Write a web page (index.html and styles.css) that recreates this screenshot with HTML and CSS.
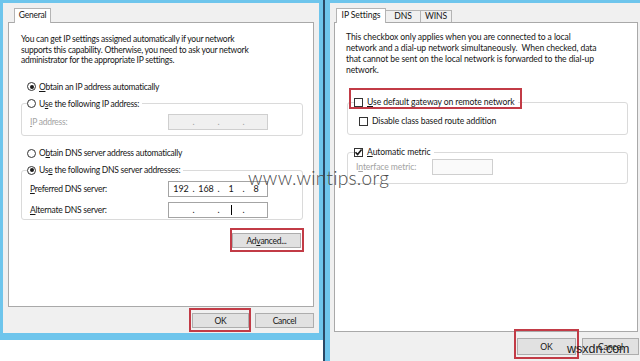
FILE: index.html
```html
<!DOCTYPE html>
<html lang="en">
<head>
    <meta charset="UTF-8">
    <meta name="viewport" content="width=device-width, initial-scale=1.0">
    <title>Internet Protocol Version 4 (TCP/IPv4) Properties</title>
    <link rel="stylesheet" href="styles.css">
</head>
<body>
<div class="screen">
    <div class="dlg dlg-left">
        <div class="tabs">
            <div class="tab active tab-general">General</div>
        </div>
        <div class="panel panel-left">
            <p class="desc">You can get IP settings assigned automatically if your network<br>supports this capability. Otherwise, you need to ask your network<br>administrator for the appropriate IP settings.</p>

            <div class="opt opt-first"><span class="radio on"></span><span><u>O</u>btain an IP address automatically</span></div>
            <fieldset class="group g-ip">
                <legend><span class="opt"><span class="radio"></span><span>U<u>s</u>e the following IP address:</span></span></legend>
                <div class="field">
                    <label class="dim"><u>I</u>P address:</label>
                    <div class="ip ip-off"><span class="oct"></span><span class="dot">.</span><span class="oct"></span><span class="dot">.</span><span class="oct"></span><span class="dot">.</span><span class="oct"></span></div>
                </div>
            </fieldset>

            <div class="opt opt-dns"><span class="radio"></span><span>O<u>b</u>tain DNS server address automatically</span></div>
            <fieldset class="group g-dns">
                <legend><span class="opt"><span class="radio on"></span><span>Us<u>e</u> the following DNS server addresses:</span></span></legend>
                <div class="field">
                    <label><u>P</u>referred DNS server:</label>
                    <div class="ip"><span class="oct">192</span><span class="dot">.</span><span class="oct">168</span><span class="dot">.</span><span class="oct">1</span><span class="dot">.</span><span class="oct">8</span></div>
                </div>
                <div class="field field-alt">
                    <label><u>A</u>lternate DNS server:</label>
                    <div class="ip"><span class="oct"></span><span class="dot">.</span><span class="oct"></span><span class="dot">.</span><span class="oct"><span class="caret"></span></span><span class="dot">.</span><span class="oct"></span></div>
                </div>
            </fieldset>

            <div class="adv-row">
                <button class="btn btn-adv mark mark-adv">Ad<u>v</u>anced...</button>
            </div>
        </div>
        <div class="footer">
            <button class="btn btn-ok mark mark-ok">OK</button>
            <button class="btn btn-cancel">Cancel</button>
        </div>
    </div>

    <div class="sep"></div>

    <div class="dlg dlg-right">
        <div class="tabs tabs-right">
            <div class="tab active tab-ip">IP Settings</div>
            <div class="tab tab-dns">DNS</div>
            <div class="tab tab-wins">WINS</div>
        </div>
        <div class="panel panel-right">
            <p class="desc desc-right">This checkbox only applies when you are connected to a local<br>network and a dial-up network simultaneously.&nbsp; When checked, data<br>that cannot be sent on the local network is forwarded to the dial-up<br>network.</p>

            <fieldset class="group g-gw">
                <legend><span class="opt mark mark-gw"><span class="check"></span><span><u>U</u>se default gateway on remote network</span></span></legend>
                <div class="opt opt-sub"><span class="check"></span><span>Disable class based route addition</span></div>
            </fieldset>

            <fieldset class="group g-metric">
                <legend><span class="opt"><span class="check on"><svg viewBox="0 0 9 9" width="9" height="9"><path d="M1.5 4.2 L3.6 6.6 L7.6 1.4" fill="none" stroke="#1a1a1a" stroke-width="1.6"/></svg></span><span><u>A</u>utomatic metric</span></span></legend>
                <div class="field field-metric">
                    <label class="dim">I<u>n</u>terface metric:</label>
                    <div class="metric-box"></div>
                </div>
            </fieldset>
        </div>
        <div class="footer footer-right">
            <button class="btn btn-ok2 mark mark-ok2">OK</button>
            <button class="btn btn-cancel2">Cancel</button>
        </div>
    </div>

    <div class="wm wm-wintips">www.wintips.org</div>
    <div class="wm wm-wsxdn">wsxdn.com</div>
</div>
</body>
</html>
```

FILE: styles.css
```css
* {
    margin: 0;
    padding: 0;
    box-sizing: border-box;
}

body {
    width: 640px;
    height: 361px;
    overflow: hidden;
    background: #fff;
    font-family: Lato, 'Noto Sans', sans-serif;
    font-size: 8.6px;
    color: #161616;
}

u {
    text-decoration: underline;
    text-underline-offset: 1px;
}

.screen {
    position: relative;
    display: flex;
    align-items: flex-start;
    height: 361px;
}

/* dialog frames */
.dlg {
    display: flex;
    flex-direction: column;
    background: #f0f0f0;
    border: 0 solid #6ec5ec;
}

.dlg-left {
    width: 323px;
    height: 340px;
    border-width: 3px 4px 7px 3px;
    padding: 5px 5px 0 5px;
    font-size: 8.5px;
    letter-spacing: -0.25px;
}

.sep {
    width: 2px;
    height: 361px;
    background: #2a4866;
}

.dlg-right {
    flex: 1;
    height: 361px;
    border-width: 3px 0 0 5px;
    padding: 5px 2px 0 4px;
    letter-spacing: -0.1px;
}

/* tabs */
.tabs {
    display: flex;
    align-items: flex-end;
    height: 14px;
    padding-left: 6px;
}

.tabs-right {
    padding-left: 2px;
}

.tab {
    height: 12px;
    border: 1px solid #b4b4b4;
    border-bottom: none;
    background: #f0f0f0;
    line-height: 11px;
    text-align: center;
}

.tab.active {
    position: relative;
    z-index: 1;
    height: 15px;
    margin-bottom: -1px;
    background: #fff;
    line-height: 13px;
}

.tab-general { width: 37px; }
.tab-ip { width: 50px; }
.tab-dns { width: 35px; border-left: none; }
.tab-wins { width: 31px; border-left: none; }

/* panel */
.panel {
    flex: none;
    border: 1px solid #a9a9a9;
    background: #fff;
}

.panel-left {
    height: 285px;
    padding: 11px 10px 0 12px;
}

.panel-right {
    height: 310px;
    padding: 9px 9px 0 12px;
}

.desc {
    line-height: 10.5px;
    white-space: nowrap;
}

.desc-right {
    line-height: 11px;
    margin-left: -1px;
}

/* radios and checkboxes */
.opt {
    display: flex;
    align-items: center;
    height: 14px;
    white-space: nowrap;
}

.opt-first {
    margin-top: 14px;
    padding-left: 6px;
}

.opt-dns {
    margin-top: 10px;
    padding-left: 6px;
}

.radio {
    position: relative;
    flex: none;
    width: 9px;
    height: 9px;
    margin-right: 3px;
    border: 1px solid #333;
    border-radius: 50%;
    background: #fff;
}

.radio.on::before {
    content: '';
    position: absolute;
    left: 1.5px;
    top: 1.5px;
    width: 4px;
    height: 4px;
    border-radius: 50%;
    background: #1a1a1a;
}

.check {
    flex: none;
    width: 9px;
    height: 9px;
    margin-right: 4px;
    border: 1px solid #333;
    background: #fff;
}

.check svg {
    display: block;
    margin: -1px 0 0 -1px;
}

/* group boxes */
.group {
    border: 1px solid #dadada;
    border-radius: 3px;
}

.group legend {
    padding-right: 3px;
}

.g-ip {
    margin-top: 3px;
    padding: 3.5px 5px 5px;
}

.g-dns {
    margin-top: 3px;
    padding: 4px 5px 1px;
}

.g-gw {
    margin-top: 19px;
    padding: 5px 6px 6px;
}

.g-metric {
    margin-top: 10px;
    padding: 0 6px 8px;
}

.opt-sub {
    padding-left: 5px;
}

.field {
    display: flex;
    align-items: center;
    height: 16px;
    padding-left: 3px;
}

.field-alt {
    margin-top: 5px;
}

.field label {
    flex: 0 0 138px;
}

.field-metric {
    padding-left: 2px;
}

.field-metric label {
    flex: 0 0 76px;
}

.dim {
    color: #a3a3a3;
}

/* ip address boxes */
.ip {
    display: flex;
    width: 100px;
    height: 16px;
    padding-left: 1px;
    border: 1px solid #a4a4a4;
    background: #fff;
    line-height: 14px;
    font-size: 9px;
    letter-spacing: 0;
}

.ip-off {
    border-color: #cfcfcf;
    background: #f0f0f0;
    color: #a0a0a0;
}

.oct {
    width: 22px;
    text-align: center;
}

.dot {
    width: 3px;
    text-align: center;
}

.caret {
    display: inline-block;
    width: 1px;
    height: 10px;
    margin-top: 2px;
    vertical-align: top;
    background: #000;
}

.metric-box {
    width: 61px;
    height: 16px;
    border: 1px solid #cfcfcf;
    background: #fafafa;
}

/* buttons */
.btn {
    font: inherit;
    letter-spacing: inherit;
    color: #161616;
    background: #e1e1e1;
    border: 1px solid #adadad;
    text-align: center;
}

.adv-row {
    display: flex;
    justify-content: flex-end;
    margin-top: 13px;
    padding-right: 2px;
}

.btn-adv {
    width: 69px;
    height: 15px;
}

.footer {
    display: flex;
    justify-content: flex-end;
    gap: 6px;
    padding-top: 6px;
}

.btn-ok { width: 57px; height: 15px; }
.btn-cancel { width: 59px; height: 15px; }

.footer-right {
    margin-right: -1px;
}

.btn-ok2 { width: 59px; height: 17px; }
.btn-cancel2 { width: 57px; height: 17px; }

/* red annotation boxes */
.mark {
    position: relative;
}

.mark::after {
    content: '';
    position: absolute;
    border: 2px solid #c23b46;
    pointer-events: none;
}

.mark-adv::after { top: -6px; right: -4px; bottom: -5px; left: -3px; }
.mark-ok::after { top: -6px; right: -3px; bottom: -5px; left: -4px; }
.mark-ok2::after { top: -10px; right: -4px; bottom: -5px; left: -4px; }
.mark-gw::after { top: -7px; right: -7px; bottom: 0; left: -5px; }

/* watermarks */
.wm {
    position: absolute;
    white-space: nowrap;
    letter-spacing: 0;
}

.wm-wintips {
    left: 248px;
    top: 168px;
    font-family: Lato, sans-serif;
    font-weight: 300;
    font-size: 19px;
    line-height: 19px;
    letter-spacing: 0.3px;
    color: #4a4a4a;
}

.wm-wsxdn {
    left: 567px;
    top: 343px;
    font-family: 'Liberation Sans', sans-serif;
    font-size: 12.5px;
    line-height: 13px;
    color: #222;
}
```
